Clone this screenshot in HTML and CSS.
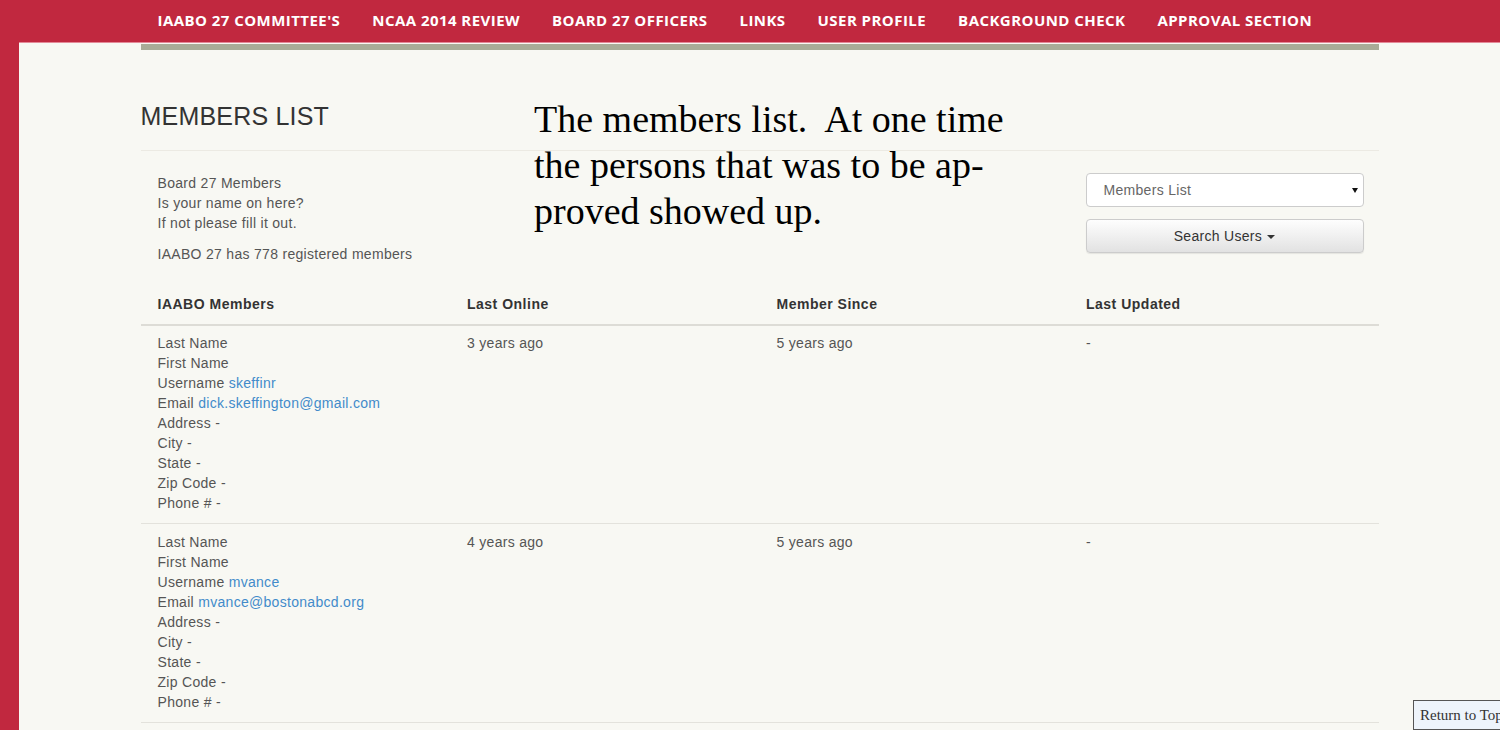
FILE: index.html
```html
<!DOCTYPE html>
<html lang="en">
  <head>
    <meta charset="UTF-8" />
    <meta name="viewport" content="width=device-width, initial-scale=1.0" />
    <title>Members List</title>
    <link rel="stylesheet" href="styles.css">
  </head>
  <body>
    <div class="topbar">
      <ul class="nav">
        <li>IAABO 27 COMMITTEE'S</li>
        <li>NCAA 2014 REVIEW</li>
        <li>BOARD 27 OFFICERS</li>
        <li>LINKS</li>
        <li>USER PROFILE</li>
        <li>BACKGROUND CHECK</li>
        <li>APPROVAL SECTION</li>
      </ul>
    </div>

    <div class="page">
      <div class="container">
        <div class="rule-bar"></div>

        <h1 class="page-title">MEMBERS LIST</h1>

        <div class="intro">
          <div class="intro-text">
            <p>Board 27 Members<br>Is your name on here?<br>If not please fill it out.</p>
            <p>IAABO 27 has 778 registered members</p>
          </div>
          <div class="intro-tools">
            <div class="select-box">Members List</div>
            <div class="btn">Search Users <span class="caret"></span></div>
          </div>
        </div>

        <table class="members">
          <thead>
            <tr>
              <th>IAABO Members</th>
              <th>Last Online</th>
              <th>Member Since</th>
              <th>Last Updated</th>
            </tr>
          </thead>
          <tbody>
            <tr>
              <td>
                Last Name<br>
                First Name<br>
                Username <a href="#">skeffinr</a><br>
                Email <a href="#">dick.skeffington@gmail.com</a><br>
                Address -<br>
                City -<br>
                State -<br>
                Zip Code -<br>
                Phone # -
              </td>
              <td>3 years ago</td>
              <td>5 years ago</td>
              <td>-</td>
            </tr>
            <tr>
              <td>
                Last Name<br>
                First Name<br>
                Username <a href="#">mvance</a><br>
                Email <a href="#">mvance@bostonabcd.org</a><br>
                Address -<br>
                City -<br>
                State -<br>
                Zip Code -<br>
                Phone # -
              </td>
              <td>4 years ago</td>
              <td>5 years ago</td>
              <td>-</td>
            </tr>
          </tbody>
        </table>
      </div>

      <!-- note written over the screenshot -->
      <div class="note">The members list.&nbsp; At one time<br>the persons that was to be ap-<br>proved showed up.</div>
    </div>

    <div class="to-top">Return to Top</div>
  </body>
</html>
```

FILE: styles.css
```css
body {
  margin: 0;
  background-color: #c1283f;
  font-family: "Liberation Sans", Arial, sans-serif;
  font-size: 14px;
  line-height: 20px;
  letter-spacing: 0.3px;
  color: #555;
  height: 730px;
  overflow: hidden;
}

.topbar {
  height: 42px;
  padding-left: 19px;
}

.nav {
  list-style: none;
  margin: 0 auto;
  padding: 0 0 2px 17px;
  width: 1221px;
  display: flex;
  gap: 32px;
  align-items: center;
  height: 40px;
}

.nav li {
  font-family: "Open Sans", sans-serif;
  font-weight: 700;
  font-size: 15px;
  color: #fff;
  letter-spacing: 0.45px;
  white-space: nowrap;
}

.page {
  position: relative;
  margin-left: 19px;
  background-color: #f8f8f3;
  border-top: 1px solid #e48a98;
  height: 700px;
}

.container {
  width: 1238px;
  margin: 0 auto;
}

.rule-bar {
  height: 6px;
  margin-top: 1px;
  background-color: #a9ab97;
}

.page-title {
  margin: 51px 0 0;
  font-weight: 400;
  font-size: 25px;
  line-height: 30px;
  color: #333;
  letter-spacing: 0.2px;
  padding-bottom: 19px;
  border-bottom: 1px solid #eceae3;
}

.intro {
  display: flex;
  justify-content: space-between;
  padding: 22px 15px 0 17px;
}

.intro-text p {
  margin: 0 0 11px;
}

.intro-tools {
  width: 278px;
}

.select-box {
  position: relative;
  height: 32px;
  line-height: 32px;
  padding-left: 17px;
  background-color: #fff;
  border: 1px solid #ccc;
  border-radius: 4px;
  color: #666;
}

.select-box::after {
  content: "";
  position: absolute;
  right: 5px;
  top: 14px;
  border-left: 3.5px solid transparent;
  border-right: 3.5px solid transparent;
  border-top: 5px solid #111;
}

.btn {
  margin-top: 12px;
  height: 32px;
  line-height: 32px;
  text-align: center;
  color: #333;
  font-size: 14px;
  border: 1px solid #ccc;
  border-radius: 4px;
  background: linear-gradient(to bottom, #fefefe, #e2e2e2);
  box-shadow: 0 1px 1px rgba(0, 0, 0, 0.08);
}

.caret {
  display: inline-block;
  vertical-align: middle;
  margin-left: 1px;
  border-left: 4px solid transparent;
  border-right: 4px solid transparent;
  border-top: 4px solid #333;
}

.members {
  width: 100%;
  margin-top: 12px;
  border-collapse: collapse;
  table-layout: fixed;
}

.members th {
  text-align: left;
  color: #333;
  font-weight: 700;
  letter-spacing: 0.5px;
  padding: 7px 17px 10px;
  border-bottom: 2px solid #dddcd6;
}

.members td {
  vertical-align: top;
  padding: 7px 17px 10px;
  border-bottom: 1px solid #e3e2dc;
}

.members tr + tr td {
  padding-top: 8px;
}

.members a {
  color: #428bca;
  text-decoration: none;
}

.note {
  position: absolute;
  left: 515px;
  top: 53px;
  font-family: "Liberation Serif", "Times New Roman", serif;
  font-size: 38px;
  line-height: 46px;
  letter-spacing: 0;
  color: #000;
}

.to-top {
  position: fixed;
  left: 1413px;
  top: 700px;
  width: 120px;
  height: 30px;
  padding: 4px 0 0 6px;
  box-sizing: border-box;
  border: 1px solid #555;
  background-color: #eef4fb;
  font-family: "Liberation Serif", serif;
  font-size: 15px;
  letter-spacing: 0;
  color: #333;
  white-space: nowrap;
}
```
